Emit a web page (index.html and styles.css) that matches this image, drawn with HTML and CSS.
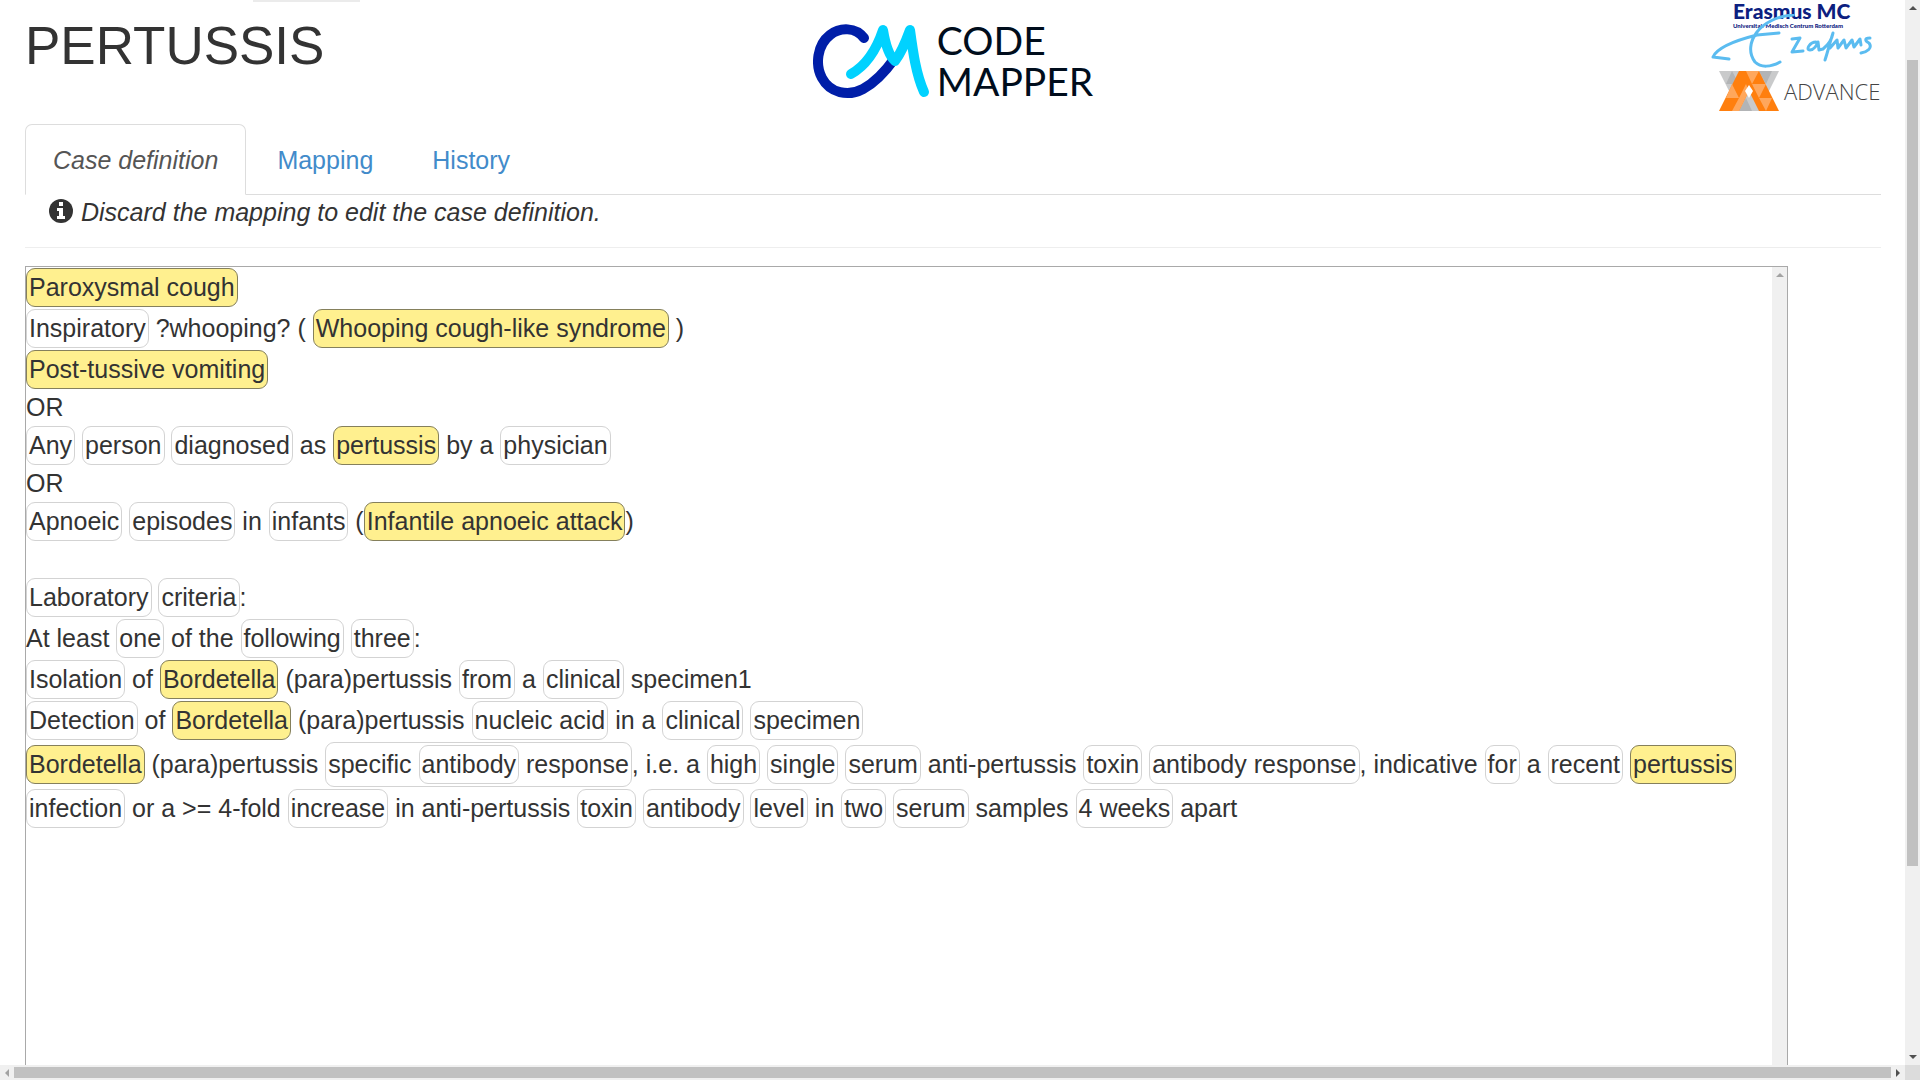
FILE: index.html
```html
<!DOCTYPE html>
<html lang="en">
<head>
<meta charset="utf-8">
<title>CodeMapper - PERTUSSIS</title>
<link rel="stylesheet" href="styles.css">
</head>
<body>
<div class="frame">
  <div class="page">
    <div class="menu-edge"></div>
    <header class="header">
      <h1 class="title">PERTUSSIS</h1>
      <div class="brand">
        <svg class="brand-mark" viewBox="0 0 122 80" aria-hidden="true" fill="none" stroke-linecap="round" stroke-linejoin="round" stroke-width="10">
          <path stroke="#001ea8" d="M51 18C43 7 27 7 17 15C4 25 2 45 9 58C17 73 35 77 50 69C63 62 72 52 82 38"/>
          <path stroke="#00d2ff" d="M38 54C54 45 64 28 70 10C72 22 75 35 82 41C89 32 93 21 97 10C100 32 103 54 111 72"/>
        </svg>
        <div class="brand-name">CODE<br>MAPPER</div>
      </div>
      <div class="partners">
        <div class="erasmus">
          <div class="erasmus-name">Erasmus MC</div>
          <div class="erasmus-sub">Universitair Medisch Centrum Rotterdam</div>
          <svg class="signature" viewBox="0 0 166 54" aria-hidden="true" fill="none" stroke="#5bbcf0" stroke-width="3" stroke-linecap="round" stroke-linejoin="round">
            <path d="M20 45L4 43C8 34 24 27 48 21L70 19M84 1C68 2 55 9 48 18C41 27 39 39 46 48C52 54 62 53 71 48"/>
            <path d="M83 25L91 24L83 38L94 37M107 28C101 28 96 36 101 36C105 36 108 31 109 28L110 36L114 35C119 31 123 25 124 19C121 28 119 37 116 46M121 34L128 26L129 34L135 26L137 34L143 26L145 33L151 25L152 31M161 24C155 24 156 27 160 29C164 34 158 38 152 39"/>
          </svg>
        </div>
        <div class="advance">
          <svg class="advance-mark" viewBox="0 0 60 40" aria-hidden="true">
            <path fill="#c9cacb" d="M0 0H20L40 40H20ZM40 0H60L40 40H20Z"/>
            <path fill="#b2b4b6" d="M7 13L13 0L20 13ZM40 0L47 13L53 0ZM20 40L27 27L33 40Z"/>
            <path fill="#ff7f0e" d="M20 0H40L60 40H40L30 20L20 40H0Z"/>
            <path fill="#ffa75c" d="M27 0H40L33 13ZM13 13L20 27L7 27ZM20 27L27 13L30 20L20 40L13 40ZM33 13H47L40 27ZM40 27H53L47 40Z"/>
            <path fill="#fff" d="M30 14L34 20L30 27L26 20Z"/>
          </svg>
          <span class="advance-name">ADVANCE</span>
        </div>
      </div>
    </header>
    <nav class="tabs">
      <a class="tab tab-active" href="#definition">Case definition</a>
      <a class="tab" href="#mapping">Mapping</a>
      <a class="tab" href="#history">History</a>
    </nav>
    <p class="notice">
      <svg class="info" viewBox="0 0 24 24" aria-hidden="true"><circle cx="12" cy="12" r="12" fill="#333"/><path fill="#fff" d="M10 3h4v4h-4zM8 9h6v8h2v3H8v-3h2v-5H8z"/></svg>
      Discard the mapping to edit the case definition.
    </p>
    <div class="definition" id="definition">
      <div class="text">
        <p><mark>Paroxysmal cough</mark></p>
        <p><span class="chip">Inspiratory</span> ?whooping? ( <mark>Whooping cough-like syndrome</mark> )</p>
        <p><mark>Post-tussive vomiting</mark></p>
        <p>OR</p>
        <p><span class="chip">Any</span> <span class="chip">person</span> <span class="chip">diagnosed</span> as <mark>pertussis</mark> by a <span class="chip">physician</span></p>
        <p>OR</p>
        <p><span class="chip">Apnoeic</span> <span class="chip">episodes</span> in <span class="chip">infants</span> (<mark>Infantile apnoeic attack</mark>)</p>
        <p><br></p>
        <p><span class="chip">Laboratory</span> <span class="chip">criteria</span>:</p>
        <p>At least <span class="chip">one</span> of the <span class="chip">following</span> <span class="chip">three</span>:</p>
        <p><span class="chip">Isolation</span> of <mark>Bordetella</mark> (para)pertussis <span class="chip">from</span> a <span class="chip">clinical</span> specimen1</p>
        <p><span class="chip">Detection</span> of <mark>Bordetella</mark> (para)pertussis <span class="chip">nucleic acid</span> in a <span class="chip">clinical</span> <span class="chip">specimen</span></p>
        <p><mark>Bordetella</mark> (para)pertussis <span class="chip">specific <span class="chip">antibody</span> response</span>, i.e. a <span class="chip">high</span> <span class="chip">single</span> <span class="chip">serum</span> anti-pertussis <span class="chip">toxin</span> <span class="chip">antibody response</span>, indicative <span class="chip">for</span> a <span class="chip">recent</span> <mark>pertussis</mark> <span class="chip">infection</span> or a &gt;= 4-fold <span class="chip">increase</span> in anti-pertussis <span class="chip">toxin</span> <span class="chip">antibody</span> <span class="chip">level</span> in <span class="chip">two</span> <span class="chip">serum</span> samples <span class="chip">4 weeks</span> apart</p>
      </div>
      <div class="inner-bar"><svg viewBox="0 0 8 4" aria-hidden="true"><path fill="#a3a3a3" d="M0 4L4 0L8 4Z"/></svg></div>
    </div>
  </div>
  <div class="vbar">
    <svg viewBox="0 0 8 4" aria-hidden="true"><path fill="#505050" d="M0 4L4 0L8 4Z"/></svg>
    <div class="track"><div class="vthumb"></div></div>
    <svg viewBox="0 0 8 4" aria-hidden="true"><path fill="#505050" d="M0 0L4 4L8 0Z"/></svg>
  </div>
  <div class="hbar">
    <svg viewBox="0 0 4 8" aria-hidden="true"><path fill="#a3a3a3" d="M4 0L0 4L4 8Z"/></svg>
    <div class="hthumb"></div>
    <svg viewBox="0 0 4 8" aria-hidden="true"><path fill="#505050" d="M0 0L4 4L0 8Z"/></svg>
  </div>
  <div class="corner"></div>
</div>
</body>
</html>
```
FILE: styles.css
```css
* { box-sizing: border-box; }
body { margin: 0; font: 25px/35px "Liberation Sans", Arial, sans-serif; color: #333; background: #fff; }
p { margin: 0; }
svg { flex: none; display: block; }
.frame { display: grid; grid-template: minmax(0, 1fr) 15px / minmax(0, 1fr) 15px; height: 100vh; overflow: hidden; }
.page { position: relative; overflow: hidden; padding: 0 24px 0 25px; }
.menu-edge { position: absolute; left: 253px; top: 0; width: 107px; height: 2px; background: #ebebeb; }
.header { display: grid; grid-template-columns: 1fr auto 1fr; height: 124px; }
.title { margin: 16px 0 0; font-size: 53px; line-height: 60px; font-weight: 400; }
.brand { display: flex; padding-top: 20px; }
.brand-mark { width: 122px; height: 80px; }
.brand-name { font: 39px/41px Lato, sans-serif; color: #000d1c; padding-left: 2px; }
.partners { justify-self: end; width: 172px; }
.erasmus { position: relative; height: 71px; padding-left: 24px; color: #0c2080; font-family: Lato, sans-serif; font-weight: 900; }
.erasmus-name { font-size: 21px; line-height: 22px; }
.erasmus-sub { font-size: 6px; line-height: 7px; white-space: nowrap; }
.signature { position: absolute; left: 0; top: 14px; width: 166px; height: 54px; }
.advance { display: flex; align-items: center; gap: 5px; padding-left: 10px; }
.advance-mark { width: 60px; height: 40px; }
.advance-name { font: 300 22px/40px "Open Sans", sans-serif; color: #444; }
.tabs { display: flex; gap: 3px; height: 71px; border-bottom: 1px solid #ddd; }
.tab { height: 71px; padding: 18px 27px; border: 1px solid transparent; border-radius: 7px 7px 0 0; color: #428bca; text-decoration: none; }
.tab-active { border-color: #ddd #ddd #fff; color: #555; font-style: italic; background: #fff; }
.notice { display: flex; gap: 8px; padding-left: 24px; height: 53px; border-bottom: 1px solid #eee; font-style: italic; }
.info { width: 24px; height: 24px; margin-top: 4px; }
.definition { display: flex; width: 95%; height: 100vh; margin-top: 18px; border: 1px solid #a9a9a9; }
.text { flex: 1; min-width: 0; }
.inner-bar { width: 15px; background: #f0f0f0; display: flex; justify-content: center; padding-top: 6px; }
.inner-bar svg, .vbar svg { width: 8px; height: 4px; }
.chip, mark { display: inline-block; padding: 1px 2px; margin: 1px 0; border: 1px solid #d3d3d3; border-radius: 9px; color: inherit; background: none; }
mark { background: #fff08f; border-color: #85805c; }
.vbar { display: flex; flex-direction: column; align-items: center; justify-content: space-between; background: #f0f0f0; padding: 6px 0; }
.track { flex: 1; width: 11px; padding-top: 50px; }
.vthumb { height: 81%; background: #c1c1c1; }
.hbar { display: flex; align-items: center; gap: 5px; padding: 0 5px; background: #f0f0f0; }
.hbar svg { width: 4px; height: 8px; }
.hthumb { flex: 1; height: 11px; background: #c1c1c1; }
.corner { background: #dcdcdc; }
```
